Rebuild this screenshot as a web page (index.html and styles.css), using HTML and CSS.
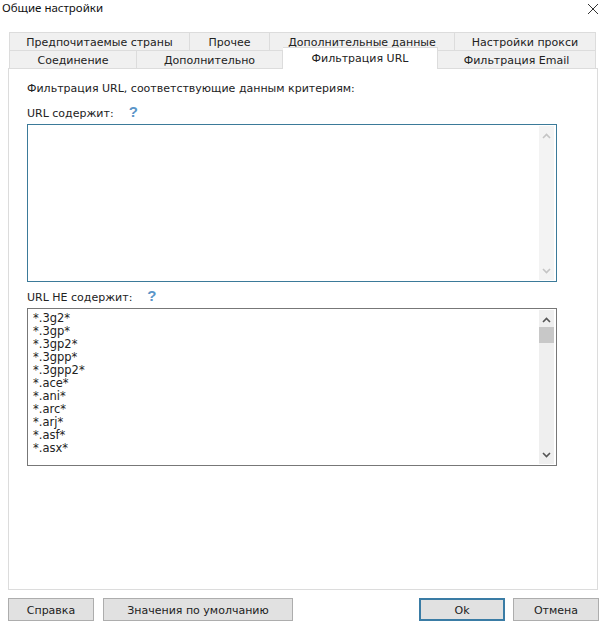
FILE: index.html
```html
<!DOCTYPE html>
<html lang="ru">
<head>
<meta charset="utf-8">
<title>Общие настройки</title>
<link rel="stylesheet" href="styles.css">
</head>
<body>
<div class="dialog">
  <header class="titlebar">
    <span class="title">Общие настройки</span>
    <svg class="close" width="12" height="12" viewBox="0 0 12 12"><path d="M1 1L11 11M11 1L1 11" stroke="#333" stroke-width="1" fill="none"/></svg>
  </header>
  <div class="tabs">
    <div class="tabrow">
      <div class="tab w181">Предпочитаемые страны</div>
      <div class="tab w80">Прочее</div>
      <div class="tab w185">Дополнительные данные</div>
      <div class="tab w141">Настройки прокси</div>
    </div>
    <div class="tabrow">
      <div class="tab w128">Соединение</div>
      <div class="tab w146">Дополнительно</div>
      <div class="tab active w155">Фильтрация URL</div>
      <div class="tab w158">Фильтрация Email</div>
    </div>
  </div>
  <main class="panel">
    <p class="intro">Фильтрация URL, соответствующие данным критериям:</p>
    <div class="label first">URL содержит:<span class="help h1">?</span></div>
    <div class="box focused">
      <div class="list"></div>
      <div class="scroll faded">
        <svg class="arrow" width="9" height="6" viewBox="0 0 9 6"><path d="M1 5L4.5 1.5L8 5" stroke="#c4c4c4" stroke-width="1.6" fill="none"/></svg>
        <div class="spacer"></div>
        <svg class="arrow" width="9" height="6" viewBox="0 0 9 6"><path d="M1 1L4.5 4.5L8 1" stroke="#c4c4c4" stroke-width="1.6" fill="none"/></svg>
      </div>
    </div>
    <div class="label second">URL НЕ содержит:<span class="help h2">?</span></div>
    <div class="box">
      <div class="list">
        <div>*.3g2*</div><div>*.3gp*</div><div>*.3gp2*</div><div>*.3gpp*</div><div>*.3gpp2*</div><div>*.ace*</div><div>*.ani*</div><div>*.arc*</div><div>*.arj*</div><div>*.asf*</div><div>*.asx*</div>
      </div>
      <div class="scroll">
        <svg class="arrow" width="9" height="6" viewBox="0 0 9 6"><path d="M1 5L4.5 1.5L8 5" stroke="#555" stroke-width="1.6" fill="none"/></svg>
        <div class="thumb"></div>
        <div class="spacer"></div>
        <svg class="arrow" width="9" height="6" viewBox="0 0 9 6"><path d="M1 1L4.5 4.5L8 1" stroke="#555" stroke-width="1.6" fill="none"/></svg>
      </div>
    </div>
  </main>
  <footer class="buttons">
    <button class="btn w86">Справка</button>
    <button class="btn w190">Значения по умолчанию</button>
    <div class="grow"></div>
    <button class="btn w86 primary">Ok</button>
    <button class="btn w86">Отмена</button>
  </footer>
</div>
</body>
</html>
```
FILE: styles.css
```css
html, body { margin: 0; padding: 0; background: #fff; }
body { width: 605px; height: 622px; overflow: hidden; font-family: "DejaVu Sans", sans-serif; font-size: 11px; color: #222; }
.dialog { display: flex; flex-direction: column; height: 622px; }
.titlebar { display: flex; justify-content: space-between; align-items: center; height: 32px; padding: 0 6px 14px 2px; box-sizing: border-box; }
.title { font-size: 11.5px; line-height: 16px; margin-top: -2px; color: #111; font-family: "Noto Sans", sans-serif; }
.tabs { padding-left: 9px; }
.tabrow { display: flex; height: 18px; }
.tab { box-sizing: border-box; height: 18px; background: #f0f0f0; border: 1px solid #dcdcdc; border-left-width: 0; border-bottom-width: 0; text-align: center; line-height: 19px; white-space: nowrap; }
.tab:first-child { border-left-width: 1px; }
.w181 { width: 181px; } .w80 { width: 80px; } .w185 { width: 185px; } .w141 { width: 141px; }
.w128 { width: 128px; } .w146 { width: 146px; } .w155 { width: 155px; } .w158 { width: 158px; }
.tab.active { position: relative; z-index: 2; height: 22px; margin-top: -3px; background: #fff; border-bottom: 0; line-height: 21px; }
.panel { box-sizing: border-box; width: 590px; height: 522px; margin-left: 8px; padding: 13px 18px 0 18px; background: #fff; border: 1px solid #dcdcdc; flex: none; }
.intro { margin: 0; height: 14px; line-height: 14px; }
.label { height: 14px; line-height: 14px; }
.label.first { margin-top: 8px; margin-bottom: 6px; }
.label.second { margin-top: 6px; margin-bottom: 6px; }
.help { color: #5a95c8; font-family: "Liberation Sans", sans-serif; font-weight: bold; font-size: 15px; line-height: 1; }
.h1 { margin-left: 15px; } .h2 { margin-left: 15px; }
.box { box-sizing: border-box; display: flex; width: 530px; height: 158px; border: 1px solid #777; background: #fff; }
.box.focused { border-color: #3b7a99; }
.list { flex: 1; padding: 3px 0 0 5px; line-height: 13px; font-size: 11.5px; }
.scroll { display: flex; flex-direction: column; align-items: center; width: 15px; margin: 1px 2px 1px 0; background: #efefef; padding: 7px 0 6px; box-sizing: border-box; }
.scroll.faded { background: #f3f3f3; }
.spacer { flex: 1; }
.thumb { align-self: stretch; height: 16px; margin-top: 4px; background: #c8c8c8; }
.buttons { display: flex; padding: 8px 6px 0 8px; height: 23px; }
.grow { flex: 1; }
.btn { box-sizing: border-box; height: 23px; padding: 2px 0 0; background: #e1e1e1; border: 1px solid #adadad; font: inherit; color: #222; }
.btn + .btn { margin-left: 9px; }
.primary { border: 2px solid #3a7ca5; }
.primary + .btn { margin-left: 8px; }
.w86 { width: 86px; } .w190 { width: 190px; }
```
